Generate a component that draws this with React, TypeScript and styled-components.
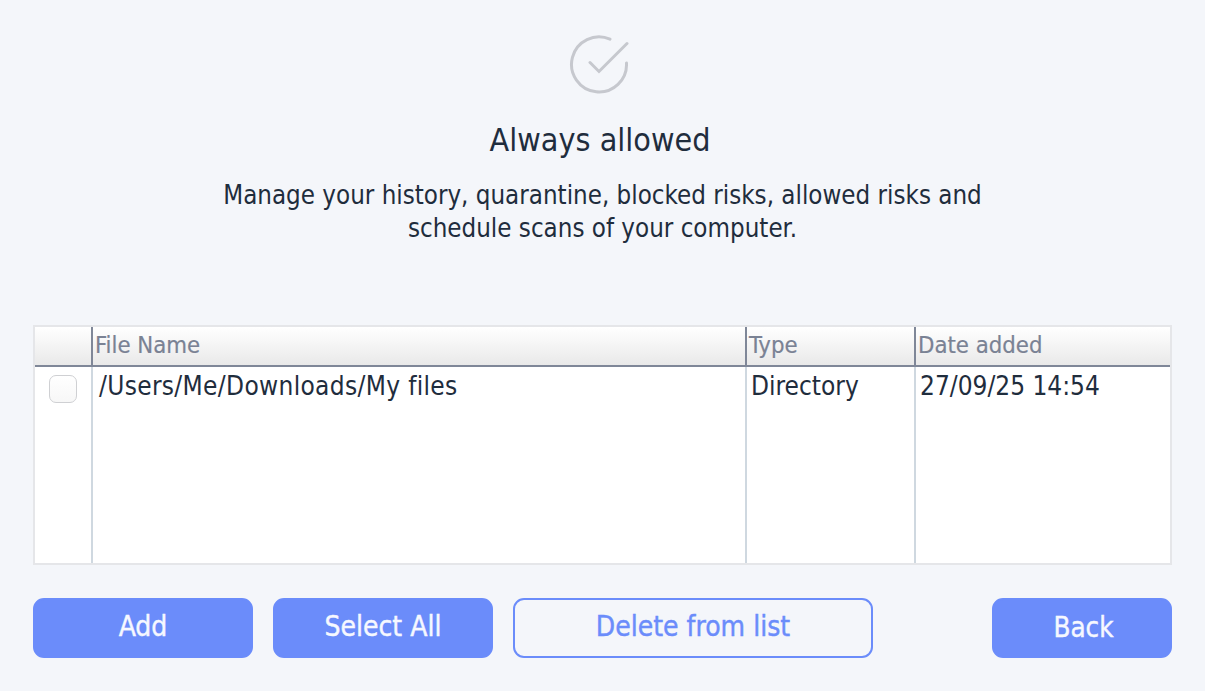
import React from 'react';
import styled, { createGlobalStyle } from 'styled-components';

const GlobalStyle = createGlobalStyle`
  html, body {
    margin: 0;
    background: #f4f6fa;
  }
  body {
    font-family: 'DejaVu Sans', 'Noto Sans', sans-serif;
    font-stretch: condensed;
  }
`;

const columns = '56px 654px 169px 1fr';

const App: React.FC = () => (
  <Page>
    <GlobalStyle />
    <Intro>
      <Badge width="60" height="60" viewBox="0 0 60 60" fill="none">
        <path d="M41 4.2A27.5 27.5 0 1 0 57.5 28" />
        <path d="M21 27.5L30 36.5L58 8.5" />
      </Badge>
      <Title>Always allowed</Title>
      <Description>
        Manage your history, quarantine, blocked risks, allowed risks and
        <br />
        schedule scans of your computer.
      </Description>
    </Intro>
    <Table>
      <HeaderRow>
        <HeaderCell />
        <HeaderCell $divider>File Name</HeaderCell>
        <HeaderCell $divider>Type</HeaderCell>
        <HeaderCell $divider>Date added</HeaderCell>
      </HeaderRow>
      <BodyRow>
        <CheckCell>
          <Checkbox />
        </CheckCell>
        <PathCell>/Users/Me/Downloads/My files</PathCell>
        <BodyCell>Directory</BodyCell>
        <BodyCell>27/09/25 14:54</BodyCell>
      </BodyRow>
    </Table>
    <Actions>
      <Button>Add</Button>
      <Button>Select All</Button>
      <Button $outline $wide>
        Delete from list
      </Button>
      <BackButton>Back</BackButton>
    </Actions>
  </Page>
);

export default App;

const Page = styled.div`
  width: 1205px;
  height: 691px;
  box-sizing: border-box;
  padding: 35px 33px 0;
  overflow: hidden;
  background: #f4f6fa;
  color: #1f2d3d;
`;

const Intro = styled.div`
  display: flex;
  flex-direction: column;
  align-items: center;
  height: 290px;
`;

const Badge = styled.svg`
  display: block;
  margin-right: 7px;
  stroke: #c6c8ce;
  stroke-width: 3;
  stroke-linecap: round;
`;

const Title = styled.h1`
  margin: 25px 5px 0 0;
  font-size: 32px;
  line-height: 40px;
  font-weight: 400;
`;

const Description = styled.p`
  margin: 19px 0 0;
  font-size: 25.7px;
  line-height: 33px;
  text-align: center;
`;

const Table = styled.div`
  display: flex;
  flex-direction: column;
  box-sizing: border-box;
  width: 1139px;
  height: 240px;
  border: 2px solid #e5e6e9;
  background: #fff;
`;

const HeaderRow = styled.div`
  display: grid;
  grid-template-columns: ${columns};
  height: 40px;
  box-sizing: border-box;
  border-bottom: 2px solid #7f8798;
  background: linear-gradient(#ffffff, #e9e9e9);
`;

const HeaderCell = styled.div<{ $divider?: boolean }>`
  padding-left: 2px;
  border-left: ${(p) => (p.$divider ? '2px solid #7f8798' : 'none')};
  font-size: 23.7px;
  line-height: 36px;
  color: #7a8294;
  -webkit-text-stroke: 0.2px #7a8294;
`;

const BodyRow = styled.div`
  display: grid;
  grid-template-columns: ${columns};
  flex: 1;
`;

const BodyCell = styled.div`
  padding: 1px 0 0 4px;
  border-left: 2px solid #cfd8e0;
  font-size: 26px;
  line-height: 36px;
  color: #1f2d3d;
`;

const PathCell = styled(BodyCell)`
  padding-left: 6px;
  letter-spacing: 0.33px;
`;

const CheckCell = styled.div`
  padding: 8px 0 0 14px;
`;

const Checkbox = styled.div`
  box-sizing: border-box;
  width: 28px;
  height: 28px;
  border: 1px solid #cfd0d3;
  border-radius: 7px;
  background: linear-gradient(#ffffff, #f7f7f7);
`;

const Actions = styled.div`
  display: flex;
  gap: 20px;
  margin-top: 33px;
`;

const Button = styled.div<{ $outline?: boolean; $wide?: boolean }>`
  display: flex;
  align-items: center;
  justify-content: center;
  box-sizing: border-box;
  width: ${(p) => (p.$wide ? '360px' : '220px')};
  height: 60px;
  padding-bottom: 3px;
  border: 2px solid #6b8cfa;
  border-radius: 11px;
  background: ${(p) => (p.$outline ? 'transparent' : '#6b8cfa')};
  color: ${(p) => (p.$outline ? '#6b8cfa' : '#f6f8ff')};
  font-size: 28px;
  -webkit-text-stroke: 0.4px currentColor;
`;

const BackButton = styled(Button)`
  width: 180px;
  margin-left: auto;
  padding-left: 3px;
  font-size: 27.5px;
`;
